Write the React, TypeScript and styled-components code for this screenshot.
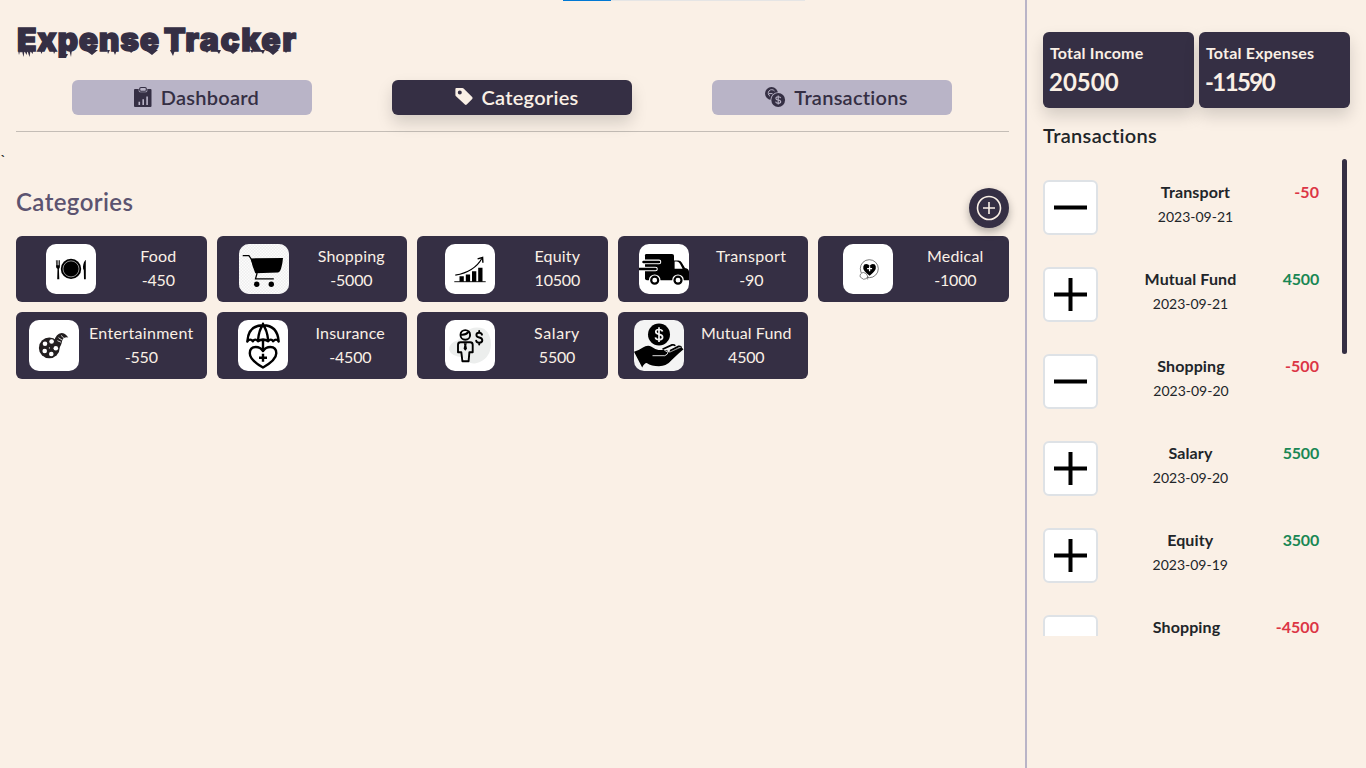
import React from "react";
import styled, { createGlobalStyle, css } from "styled-components";

const dark = "#352f44";
const mist = "#b9b4c7";
const cream = "#faf0e6";
const ink = "#212529";

const GlobalStyle = createGlobalStyle`
  * { box-sizing: border-box; }
  body {
    margin: 0;
    background: ${cream};
    color: ${ink};
    font-family: Lato, sans-serif;
    font-size: 16px;
    line-height: 24px;
    overflow: hidden;
  }
`;

const Page = styled.div`
  display: flex;
  height: 768px;
`;

const LoadingBar = styled.div`
  position: absolute;
  top: 0;
  left: 563px;
  width: 242px;
  height: 1px;
  background: linear-gradient(to right, #0078d4 48px, #e5e5e5 48px);
`;

const Main = styled.main`
  width: 1025px;
  flex: none;
`;

const Header = styled.header`
  position: relative;
  margin: 0 16px;
  padding-top: 20px;
  height: 132px;
  border-bottom: 1px solid #c4bdb6;
`;

const Title = styled.h1`
  margin: 0;
  height: 40px;
  padding-left: 1px;
  color: ${dark};
  font-family: Inter, sans-serif;
  font-size: 32px;
  font-weight: 900;
  line-height: 40px;
  letter-spacing: 0.65px;
  word-spacing: -3px;
  white-space: nowrap;
  -webkit-text-stroke: 1.4px ${dark};
`;

const TitleWide = styled.span`
  letter-spacing: 1.45px;
`;

const Drips = styled.svg`
  position: absolute;
  top: 46px;
  left: 0;
`;

const Tabs = styled.nav`
  display: flex;
  justify-content: center;
  gap: 80px;
  padding-top: 20px;
  width: 992px;
`;

const Tab = styled.button<{ $active?: boolean }>`
  display: flex;
  align-items: center;
  justify-content: center;
  gap: 8px;
  width: 240px;
  height: 35px;
  padding: 0 0 0 8px;
  border: 0;
  border-radius: 6px;
  font: 600 20px/30px Lato, sans-serif;
  letter-spacing: 0.25px;
  color: ${(p) => (p.$active ? cream : dark)};
  background: ${(p) => (p.$active ? dark : mist)};
  ${(p) => p.$active && css`box-shadow: 0 8px 16px rgba(0, 0, 0, 0.15);`}

  svg {
    margin-top: -1px;
  }
`;

const TabLabel = styled.span`
  padding-bottom: 1px;
`;

const Tick = styled.div`
  height: 24px;
  margin-top: 16px;
  line-height: 24px;
`;

const Section = styled.section`
  padding: 16px 16px 0;
`;

const SectionHead = styled.div`
  display: flex;
  justify-content: space-between;
  height: 48px;
`;

const SectionTitle = styled.h2`
  margin: 0;
  color: #5c5470;
  font-size: 24px;
  font-weight: 600;
  line-height: 28px;
  letter-spacing: 0.4px;
`;

const AddButton = styled.button`
  position: relative;
  z-index: 1;
  display: grid;
  place-items: center;
  width: 40px;
  height: 40px;
  padding: 0;
  border: 0;
  border-radius: 50%;
  background: ${dark};
  box-shadow: 0 4px 8px rgba(0, 0, 0, 0.3);
`;

const Grid = styled.div`
  display: grid;
  grid-template-columns: repeat(5, 1fr);
  grid-auto-rows: 66.4px;
  gap: 10px;
`;

const Card = styled.article`
  display: flex;
  align-items: center;
  justify-content: space-around;
  padding: 8px;
  border-radius: 6px;
  color: ${cream};
  background: ${dark};
`;

const Picture = styled.svg<{ $tint?: string }>`
  flex: none;
  width: 50px;
  height: 50.4px;
  border-radius: 10px;
  background: ${(p) => p.$tint ?? "#fff"};
`;

const CardText = styled.div<{ $w: number }>`
  display: flex;
  flex-direction: column;
  align-items: center;
  width: ${(p) => p.$w}px;
  padding-bottom: 2px;
  white-space: nowrap;
`;

const CardName = styled.span<{ $track?: number }>`
  letter-spacing: ${(p) => p.$track ?? 0.2}px;
`;

const CardAmount = styled.span`
  letter-spacing: -0.2px;
`;

const Sidebar = styled.aside`
  flex: 1;
  padding: 32px 16px 0;
  border-left: 2px solid ${mist};
`;

const Totals = styled.div`
  display: flex;
  gap: 5px;
`;

const Total = styled.div`
  flex: 1;
  height: 76px;
  padding: 8px 7px;
  border-radius: 6px;
  color: ${cream};
  background: ${dark};
  box-shadow: 0 8px 16px rgba(0, 0, 0, 0.15);
  font-weight: 700;
  white-space: nowrap;
`;

const TotalLabel = styled.div`
  height: 24px;
  line-height: 25px;
  letter-spacing: 0.2px;
`;

const TotalValue = styled.div<{ $track: number }>`
  margin-left: -1px;
  font-size: 24px;
  line-height: 36px;
  letter-spacing: ${(p) => p.$track}px;
`;

const SideTitle = styled.h2`
  margin: 15px 0 11px;
  font-size: 20px;
  font-weight: 600;
  line-height: 25px;
  letter-spacing: 0.32px;
`;

const Scroller = styled.div`
  display: flex;
  justify-content: space-between;
  height: 477px;
  margin-right: 3px;
  overflow: hidden;
`;

const Thumb = styled.div`
  flex: none;
  width: 5px;
  height: 195px;
  border-radius: 3px;
  background: ${dark};
`;

const List = styled.div`
  width: 276px;
  padding-top: 21px;
`;

const Item = styled.div`
  display: flex;
  justify-content: space-between;
  height: 87px;
`;

const SignBox = styled.div`
  display: grid;
  place-items: center;
  width: 55px;
  height: 55px;
  border: 2px solid #dee2e6;
  border-radius: 6px;
  background: #fff;
`;

const ItemText = styled.div`
  text-align: center;
  white-space: nowrap;
`;

const ItemName = styled.div`
  font-weight: 700;
  letter-spacing: 0.12px;
`;

const ItemDate = styled.div`
  padding-top: 1px;
  font-size: 14px;
`;

const ItemAmount = styled.div<{ $w: number; $positive: boolean }>`
  width: ${(p) => p.$w}px;
  display: flex;
  justify-content: flex-end;
  font-weight: 700;
  white-space: nowrap;
  letter-spacing: ${(p) => (p.$positive ? -0.2 : 0.05)}px;
  color: ${(p) => (p.$positive ? "#198754" : "#dc3545")};
`;

const ClipboardIcon = () => (
  <svg width="20" height="22" viewBox="0 0 20 22">
    <path d="M2 3H17.500q1 0 1 1V20q0 1-1 1H2q-1 0-1-1V4q0-1 1-1z" fill={dark} />
    <rect x="5.700" y=".7" width="8.600" height="5.600" rx="1.500" fill={mist} />
    <rect x="6.700" y="1.500" width="6.600" height="3.800" rx="1.300" fill={mist} stroke={dark} strokeWidth="1.100" />
    <path d="M6.300 15.800v3.200M10.200 13.200v5.800M14.100 10.600v8.400" stroke={mist} strokeWidth="1.600" />
  </svg>
);

const TagIcon = () => (
  <svg width="20" height="20" viewBox="0 0 20 20">
    <path fillRule="evenodd" d="M2.300 1H8.400q.7 0 1.200.5l8.600 8.600q.9.900 0 1.800l-5.500 5.600q-.9.900-1.800 0L2 9.200q-.6-.6-.6-1.300V2q0-1 .9-1zM5.800 3.600a2 2 0 1 0 0 4a2 2 0 1 0 0-4z" fill={cream} />
  </svg>
);

const CoinsIcon = () => (
  <svg width="22" height="22" viewBox="0 0 22 22">
    <circle cx="7.500" cy="7.500" r="6.500" fill={dark} />
    <path d="M10.500 5a3.500 3.500 0 1 0-4.500 5.200M5 7.600h3.500" fill="none" stroke={mist} strokeWidth="1" />
    <circle cx="14.200" cy="14" r="7.800" fill={mist} />
    <circle cx="14.200" cy="14" r="6.900" fill={dark} />
    <path d="M16.700 12.200q-.3-1.500-2.500-1.500-2.300 0-2.300 1.700 0 1.300 2.300 1.600 2.500.3 2.500 1.800 0 1.600-2.500 1.600-2.300 0-2.600-1.700M14.200 9.500v9" fill="none" stroke={mist} strokeWidth="1.100" />
  </svg>
);

const FoodPicture = () => (
  <Picture viewBox="0 0 50 50">
    <circle cx="25" cy="24.700" r="10.200" />
    <circle cx="25" cy="24.700" r="8" fill="none" stroke="#ddd" strokeWidth=".65" />
    <path d="M9.900 16h.8v5h.7v-5h1v5h.7v-5h.8v6.500q0 1.500-1 2l.4 10.500h-2.100l.3-10.500q-1.400-.5-1.400-2z" />
    <path d="M39.800 15.500V35H38l-.2-9q-1-1.300-.8-3.400.4-5 2.800-7.100z" />
  </Picture>
);

const CartPicture = () => (
  <Picture viewBox="0 0 50 50">
    <defs>
      <pattern id="checks" width="3" height="3" patternUnits="userSpaceOnUse">
        <path d="M0 0h1.500v1.500H0zM1.500 1.500H3V3H1.500z" fill="#ececec" />
      </pattern>
    </defs>
    <rect width="50" height="50" fill="url(#checks)" />
    <path d="M3.700 11.500h6.200L12 14.500l6 14.800-1.500 5.300h18.300" fill="none" stroke="#000" strokeWidth="1.300" />
    <path d="M11.800 14.200L44 13.900q-.4 5-1.500 9-1.200 5.300-3.500 5.400L16.300 29q-3-6.500-4.500-14.800z" />
    <circle cx="17.700" cy="40" r="2.700" />
    <circle cx="32.300" cy="40" r="2.700" />
  </Picture>
);

const EquityPicture = () => (
  <Picture viewBox="0 0 50 50">
    <path d="M9.300 37.500h31.400" stroke="#000" strokeWidth=".9" />
    <path d="M14.500 32h4.300v5.500h-4.300zM20.800 30.300h4.300v7.200h-4.300zM27 27h4.300v10.500H27zM33.200 23.600h4.300v13.900h-4.300z" />
    <path d="M10.300 31Q29.500 27.500 37 14" fill="none" stroke="#000" strokeWidth="1.200" />
    <path d="M32.600 14.700l5-1.400.3 5.200" fill="none" stroke="#000" strokeWidth="1.400" />
  </Picture>
);

const TransportPicture = () => (
  <Picture viewBox="0 0 50 50">
    <path d="M7.300 9.700H33q2 0 2 2V36H8q-2 0-2-2V11q0-1.300 1.300-1.300z" />
    <path d="M35 16.300h4.500q2 0 3.200 2l3.300 5.500q4 .8 4 3.800V36H35z" />
    <path d="M35.600 17.400v7.200h8l-2.800-5.200q-1.200-2-3-2z" fill="#fff" />
    <path d="M5.500 17.700H20M0 24.800h16.500" stroke="#fff" strokeWidth="4.600" strokeLinecap="round" />
    <path d="M4.500 17.700H20M0 24.800h16.500" stroke="#000" strokeWidth="2.500" strokeLinecap="round" />
    <path d="M6.500 21.300h11.500M6.500 28.500h7" stroke="#000" strokeWidth="1.600" />
    <circle cx="15.700" cy="36" r="5.800" fill="#fff" />
    <circle cx="39" cy="36" r="5.800" fill="#fff" />
    <circle cx="15.700" cy="36" r="3.500" fill="#fff" stroke="#000" strokeWidth="2.200" />
    <circle cx="39" cy="36" r="3.500" fill="#fff" stroke="#000" strokeWidth="2.200" />
  </Picture>
);

const MedicalPicture = () => (
  <Picture viewBox="0 0 50 50">
    <circle cx="26.300" cy="24.500" r="9" fill="none" stroke="#444" strokeWidth=".7" />
    <path d="M26.600 31.500q-7.300-5.300-6.300-9.200.5-2.400 2.900-2.400 2.300 0 3.400 1.800 1.200-1.800 3.300-1.800 2.600 0 2.900 2.400 .8 4-6.200 9.200z" />
    <path d="M26.600 22v5M24.100 24.500h5" stroke="#fff" strokeWidth="1.300" />
    <path d="M20.500 28.300q-4 .5-3.300 4.500l3.300 2.300q3.700.2 4.200-3-1-3.400-4.200-3.800zM24.700 32v3.300" fill="#fff" stroke="#555" strokeWidth=".7" />
  </Picture>
);

const MoviePicture = () => (
  <Picture viewBox="0 0 50 50">
    <path d="M25.500 20.500q1.500-7 7-7.600 3.500 0 6.800 4.300-5-.6-6 2.800-1.300 7-5 10z" fill="#231f20" />
    <path d="M28.300 20.500l3.700 1.500M29.500 17.500l3.500 2.300M32 15.200l2.800 2.600M30 24.500l-2.500-1" stroke="#fff" strokeWidth=".8" />
    <circle cx="20.300" cy="27.700" r="10.400" fill="#231f20" />
    <g fill="#fff">
      <circle cx="22.600" cy="21.300" r="2.300" />
      <circle cx="16" cy="23.500" r="2.300" />
      <circle cx="15.700" cy="30.800" r="2.300" />
      <circle cx="22.300" cy="33.800" r="2.300" />
      <circle cx="26.800" cy="28" r="2.300" />
      <circle cx="20.400" cy="27.700" r=".6" />
    </g>
  </Picture>
);

const InsurancePicture = () => (
  <Picture viewBox="0 0 50 50">
    <g fill="none" stroke="#000" strokeWidth="2.400" strokeLinejoin="round" strokeLinecap="round">
      <path d="M9.300 21.300Q10.500 5 25 5t15.700 16.300q-2.500-3.600-5.500-.2-2.300-3.300-5-.1Q25 17.500 20 21q-2.800-3.200-5.200.1-2.600-3.400-5.500.2zM20 20.500Q21 9 25 5q4 4 5.200 15.500M25 3.500v1.500M25 19.500v9.500" />
      <path d="M25 47.300q-13.200-7.500-13.200-14.200 0-6.300 6-6.300 4.600 0 7.200 4 2.600-4 7.300-4 6 0 6 6.300 0 6.700-13.300 14.200z" />
      <path d="M25 33.500v8M21 37.500h8" strokeLinecap="butt" />
    </g>
  </Picture>
);

const SalaryPicture = () => (
  <Picture viewBox="0 0 50 50">
    <path d="M20 12Q28 5 39 8.500q7 5 7 16-1 15-15 18.500-8 1.500-13-6-12-1-14-7.500 0-7 9-9.500z" fill="#eceeed" />
    <g fill="none" stroke="#000" strokeWidth="1.900" strokeLinejoin="round" strokeLinecap="round">
      <circle cx="20.300" cy="14.700" r="4.800" />
      <path d="M16 14.500q5 .5 7.500-2.800" />
      <path d="M16.300 32H13v-7.500q0-2.500 2.500-2.500h9.700q2.500 0 2.500 2.500V32h-3.300l-.8 9h-6.200z" />
      <path d="M37 14.500q-.5-2-2.900-2-2.700 0-2.700 2.300 0 2 2.900 2.500 3 .6 3 2.800 0 2.400-3 2.400-2.700 0-3.100-2M34.200 10.800v1.500M34.200 22.700v1.600" />
    </g>
    <path d="M18.800 23h3l-.5 2 .7 3.500-1.700 2-1.700-2 .7-3.500z" />
  </Picture>
);

const FundPicture = () => (
  <Picture viewBox="0 0 50 50" $tint="#f4f4f4">
    <circle cx="25" cy="14.300" r="11" />
    <path d="M28.500 11.300q-.4-2-3.500-2-3.200 0-3.200 2.300 0 1.900 3.200 2.500 3.600.6 3.600 2.900 0 2.500-3.600 2.500-3.300 0-3.600-2.300M25 7v14.800" fill="none" stroke="#f4f4f4" strokeWidth="1.700" />
    <path d="M0 31.500q5-1.500 8.500-4 5-3.200 9-1 3.500 2.500 7 3.300h7q2.700 0 2.700 2.200l10-4.400q3.700-1.200 5.300 1.500-6 5-11.500 10.500-5.500 6.500-13 6.500-7.500 0-12.300-3.300-2.500 0-4.500 4.600z" />
    <path d="M18.500 35.500h12.300q3-1.200 3.200-3.500l-3.700-2" fill="none" stroke="#f4f4f4" strokeWidth=".9" />
    <path d="M28.500 29l9.500-4.300q3-.5 3 1.300M36 30.500l8.500-4.300q2.500-.3 2.800 1.500" stroke="#000" strokeWidth="1.800" fill="none" />
    <path d="M33.800 29.600l8.200-3.900M35.300 32.200l11.500-5.200" fill="none" stroke="#f4f4f4" strokeWidth=".6" />
  </Picture>
);

const categories = [
  { name: "Food", amount: "-450", w: 36.6, Art: FoodPicture },
  { name: "Shopping", amount: "-5000", w: 67, Art: CartPicture },
  { name: "Equity", amount: "10500", w: 45.4, Art: EquityPicture },
  { name: "Transport", amount: "-90", w: 71.8, track: 0.4, Art: TransportPicture },
  { name: "Medical", amount: "-1000", w: 58.2, Art: MedicalPicture },
  { name: "Entertainment", amount: "-550", w: 104.6, track: 0.32, Art: MoviePicture },
  { name: "Insurance", amount: "-4500", w: 71, Art: InsurancePicture },
  { name: "Salary", amount: "5500", w: 46.5, track: 0.6, Art: SalaryPicture },
  { name: "Mutual Fund", amount: "4500", w: 91.8, track: 0.1, Art: FundPicture },
];

const transactions = [
  { name: "Transport", date: "2023-09-21", amount: "-50", w: 26 },
  { name: "Mutual Fund", date: "2023-09-21", amount: "4500", w: 36 },
  { name: "Shopping", date: "2023-09-20", amount: "-500", w: 35 },
  { name: "Salary", date: "2023-09-20", amount: "5500", w: 36 },
  { name: "Equity", date: "2023-09-19", amount: "3500", w: 36.5 },
  { name: "Shopping", amount: "-4500", w: 44 },
];

export default function App() {
  return (
    <Page>
      <GlobalStyle />
      <LoadingBar />
      <Main>
        <Header>
          <Title>Expense <TitleWide>Tracker</TitleWide></Title>
          <Drips width="290" height="14" viewBox="0 0 290 14" fill={dark}>
            <path d="M2 4l1 5 1-4 1 2 1-2 1.500 6 1-6 2 4 1-4 2 6 1-6 2 3 1-4zM24 4l1.500 4 1.500-4zM37 4l1 4 2-4zM46 8l3 4 2-2 1-2zM53 3l2 8 1-8zM69 4l7 5 6-5zM91 4l1 4 2-4zM97 4l2 5 2-5zM113 4l2 3 3-3zM129 4l7 5 6-5zM154 4l3 6 2-6zM172 4l1.500 3 1.500-3zM189 4l2 3 2-3zM200 4l3 4 2-4zM212 4l5 4 5-4zM234 4l2 3 2-3zM244 4l3 4 2-4zM251 4l6 5 6-5zM268 4l2 3 2-3z" />
          </Drips>
          <Tabs>
            <Tab><ClipboardIcon /><TabLabel>Dashboard</TabLabel></Tab>
            <Tab $active><TagIcon /><TabLabel>Categories</TabLabel></Tab>
            <Tab><CoinsIcon /><TabLabel>Transactions</TabLabel></Tab>
          </Tabs>
        </Header>
        <Tick>`</Tick>
        <Section>
          <SectionHead>
            <SectionTitle>Categories</SectionTitle>
            <AddButton aria-label="Add category">
              <svg width="26" height="26" viewBox="0 0 26 26" fill="none" stroke={cream} strokeWidth="1.600">
                <circle cx="13" cy="13" r="11.500" />
                <path d="M13 7v12M7 13h12" />
              </svg>
            </AddButton>
          </SectionHead>
          <Grid>
            {categories.map(({ name, amount, w, track, Art }) => (
              <Card key={name}>
                <Art />
                <CardText $w={w}>
                  <CardName $track={track}>{name}</CardName>
                  <CardAmount>{amount}</CardAmount>
                </CardText>
              </Card>
            ))}
          </Grid>
        </Section>
      </Main>
      <Sidebar>
        <Totals>
          <Total>
            <TotalLabel>Total Income</TotalLabel>
            <TotalValue $track={0}>20500</TotalValue>
          </Total>
          <Total>
            <TotalLabel>Total Expenses</TotalLabel>
            <TotalValue $track={-1.6}>-11590</TotalValue>
          </Total>
        </Totals>
        <SideTitle>Transactions</SideTitle>
        <Scroller>
          <List>
            {transactions.map((t, i) => (
              <Item key={i}>
                <SignBox>
                  <svg width="33" height="33" viewBox="0 0 33 33" stroke="#000" strokeWidth="4">
                    <path d={t.amount.startsWith("-") ? "M0 16.500h33" : "M0 16.500h33M16.500 0v33"} />
                  </svg>
                </SignBox>
                <ItemText>
                  <ItemName>{t.name}</ItemName>
                  {t.date && <ItemDate>{t.date}</ItemDate>}
                </ItemText>
                <ItemAmount $w={t.w} $positive={!t.amount.startsWith("-")}>{t.amount}</ItemAmount>
              </Item>
            ))}
          </List>
          <Thumb />
        </Scroller>
      </Sidebar>
    </Page>
  );
}
